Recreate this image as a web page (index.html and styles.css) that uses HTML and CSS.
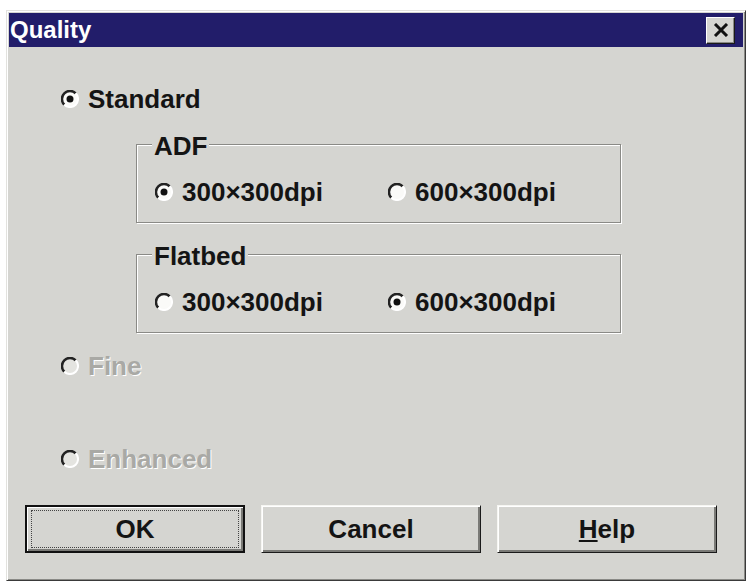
FILE: index.html
```html
<!DOCTYPE html>
<html lang="en">
<head>
  <meta charset="UTF-8">
  <title>Quality</title>
  <link rel="stylesheet" href="styles.css">
</head>
<body>
  <svg width="0" height="0" class="defs">
    <symbol id="radio" viewBox="0 0 18 18">
      <circle cx="9" cy="9" r="8" class="radio-face" />
      <path d="M3.3 14.7 A8 8 0 0 1 14.7 3.3" class="radio-shade" />
      <path d="M14.7 3.3 A8 8 0 0 1 3.3 14.7" class="radio-light" />
    </symbol>
  </svg>

  <div class="window">
    <div class="titlebar">
      <span class="title">Quality</span>
      <button class="close" type="button">
        <svg width="16" height="14" viewBox="0 0 16 14">
          <path d="M2 1 L14 13 M14 1 L2 13" stroke="#111" stroke-width="3" />
        </svg>
      </button>
    </div>

    <div class="content">
      <label class="option option-top">
        <svg class="radio" width="18" height="18"><use href="#radio" /><circle cx="9" cy="9" r="3.5" class="dot" /></svg>
        Standard
      </label>

      <fieldset class="group group-first">
        <legend>ADF</legend>
        <div class="choices">
          <label class="option">
            <svg class="radio" width="18" height="18"><use href="#radio" /><circle cx="9" cy="9" r="3.5" class="dot" /></svg>
            300×300dpi
          </label>
          <label class="option">
            <svg class="radio" width="18" height="18"><use href="#radio" /></svg>
            600×300dpi
          </label>
        </div>
      </fieldset>

      <fieldset class="group">
        <legend>Flatbed</legend>
        <div class="choices">
          <label class="option">
            <svg class="radio" width="18" height="18"><use href="#radio" /></svg>
            300×300dpi
          </label>
          <label class="option">
            <svg class="radio" width="18" height="18"><use href="#radio" /><circle cx="9" cy="9" r="3.5" class="dot" /></svg>
            600×300dpi
          </label>
        </div>
      </fieldset>

      <label class="option option-top disabled option-fine">
        <svg class="radio" width="18" height="18"><use href="#radio" /></svg>
        Fine
      </label>

      <label class="option option-top disabled option-enhanced">
        <svg class="radio" width="18" height="18"><use href="#radio" /></svg>
        Enhanced
      </label>

      <div class="buttons">
        <button class="btn btn-default" type="button"><span class="focus">OK</span></button>
        <button class="btn" type="button">Cancel</button>
        <button class="btn" type="button"><u>H</u>elp</button>
      </div>
    </div>
  </div>
</body>
</html>
```

FILE: styles.css
```css
body {
  margin: 0;
  background: #fff;
  font-family: "Liberation Sans", Arial, sans-serif;
  color: #141414;
}

.defs {
  position: absolute;
}

.window {
  box-sizing: border-box;
  width: 740px;
  height: 571px;
  margin: 10px 0 0 6px;
  padding: 2px;
  background: #d5d5d1;
  border: 1px solid;
  border-color: #e2e2de #3a3a3a #3a3a3a #e2e2de;
  box-shadow: inset 1px 1px #fff, inset -1px -1px #8a8a86;
}

.titlebar {
  display: flex;
  align-items: center;
  justify-content: space-between;
  height: 34px;
  background: #221d6a;
}

.title {
  padding-left: 1px;
  color: #fff;
  font-size: 24px;
  font-weight: bold;
}

.close {
  display: flex;
  align-items: center;
  justify-content: center;
  width: 29px;
  height: 27px;
  margin-right: 8px;
  padding: 0;
  background: #d5d5d1;
  border: 1px solid;
  border-color: #fff #1a1a1a #1a1a1a #fff;
  box-shadow: inset -1px -1px #8a8a86;
}

.option {
  display: flex;
  align-items: center;
  gap: 9px;
  height: 30px;
  font-size: 26px;
  font-weight: bold;
  line-height: 30px;
}

.option-top {
  margin: 37px 0 0 52px;
}

.radio {
  --radio-face: #fafaf8;
  flex: none;
}

.radio-face {
  fill: var(--radio-face);
}

.radio-shade {
  fill: none;
  stroke: #222;
  stroke-width: 2.5;
}

.radio-light {
  fill: none;
  stroke: #fff;
  stroke-width: 2;
}

.dot {
  fill: #111;
}

.disabled {
  color: #a9a9a5;
  text-shadow: 1px 1px 0 #fff;
}

.disabled .radio {
  --radio-face: #e4e4e0;
}

.option-fine {
  margin-top: 18px;
}

.option-enhanced {
  margin-top: 63px;
}

.group {
  box-sizing: border-box;
  width: 485px;
  margin: 14px 0 0 127px;
  padding: 0;
  border: 1px solid #8a8a86;
  box-shadow: 1px 1px 0 #fff, inset 1px 1px 0 #fff;
}

.group-first {
  margin-top: 13px;
}

.group legend {
  margin-left: 15px;
  padding: 4px 2px 0;
  background: #d5d5d1;
  font-size: 26px;
  font-weight: bold;
  line-height: 30px;
}

.choices {
  display: grid;
  grid-template-columns: 233px auto;
  padding: 16px 0 15px 18px;
}

.buttons {
  display: flex;
  gap: 16px;
  margin: 31px 0 0 16px;
}

.btn {
  box-sizing: border-box;
  display: flex;
  align-items: center;
  justify-content: center;
  width: 220px;
  height: 48px;
  padding: 0;
  background: #d5d5d1;
  border: 1px solid;
  border-color: #f6f6f2 #1a1a1a #1a1a1a #f6f6f2;
  box-shadow: inset 1px 1px #fff, inset -2px -2px #7a7a76;
  font-family: inherit;
  font-size: 26px;
  font-weight: bold;
  color: #141414;
}

.btn-default {
  border: 2px solid #111;
  padding: 4px;
}

.btn-default .focus {
  display: flex;
  align-items: center;
  justify-content: center;
  width: 100%;
  height: 100%;
  border: 1px dotted #444;
}
```
